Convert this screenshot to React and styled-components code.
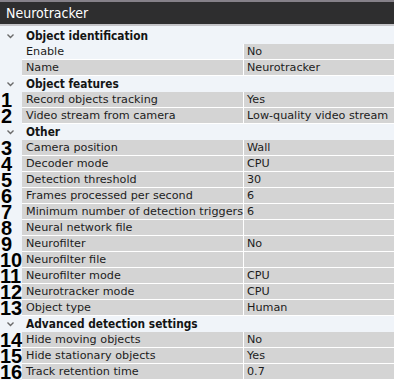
import styled, { createGlobalStyle } from 'styled-components';

const GlobalStyle = createGlobalStyle`
  body {
    margin: 0;
    background: #f0f4f9;
    font-family: "DejaVu Sans Condensed", "DejaVu Sans", sans-serif;
  }
`;

const Panel = styled.div`
  width: 394px;
  height: 380px;
  overflow: hidden;
  background: #f0f4f9;
`;

const TitleBar = styled.div`
  height: 22px;
  border-top: 2px solid #858189;
  border-bottom: 2px solid #c4c4c8;
  background: #2e2e2f;
  color: #fff;
  font-size: 14px;
  line-height: 22px;
  padding-left: 6px;
`;

const List = styled.div`
  padding-top: 2px;
`;

const SectionHeader = styled.div`
  display: flex;
  align-items: center;
  height: 16px;
  font-size: 11.8px;
  font-weight: bold;
  color: #141414;
`;

const Chevron = styled.svg`
  width: 22px;
  height: 16px;
  flex: none;
`;

const HeaderText = styled.span`
  padding-left: 4px;
`;

const Row = styled.div`
  display: grid;
  grid-template-columns: 22px 222px 150px;
  height: 16px;
  font-family: "DejaVu Sans", sans-serif;
  font-size: 11.2px;
  color: #1c1c1c;
`;

const Num = styled.div`
  position: relative;
  z-index: 1;
  font-family: "Liberation Sans", Arial, sans-serif;
  font-weight: bold;
  font-size: 20px;
  line-height: 16px;
  color: #000;
  padding-left: ${p => (p.$wide ? 0 : 1)}px;
  white-space: nowrap;
`;

const Cell = styled.div`
  background: ${p => (p.$plain ? 'transparent' : '#d4d4d4')};
  border-bottom: 1px solid #fff;
  line-height: 15px;
  padding-left: ${p => (p.$value ? 3 : 4)}px;
  white-space: nowrap;
  overflow: ${p => (p.$value ? 'hidden' : 'visible')};
`;

const LabelCell = styled(Cell)`
  border-right: 1px solid #fff;
`;

const sections = [
  {
    title: 'Object identification',
    rows: [
      { label: 'Enable', value: 'No', plain: true },
      { label: 'Name', value: 'Neurotracker' },
    ],
  },
  {
    title: 'Object features',
    rows: [
      { n: 1, label: 'Record objects tracking', value: 'Yes' },
      { n: 2, label: 'Video stream from camera', value: 'Low-quality video stream' },
    ],
  },
  {
    title: 'Other',
    rows: [
      { n: 3, label: 'Camera position', value: 'Wall' },
      { n: 4, label: 'Decoder mode', value: 'CPU' },
      { n: 5, label: 'Detection threshold', value: '30' },
      { n: 6, label: 'Frames processed per second', value: '6' },
      { n: 7, label: 'Minimum number of detection triggers', value: '6' },
      { n: 8, label: 'Neural network file', value: '' },
      { n: 9, label: 'Neurofilter', value: 'No' },
      { n: 10, label: 'Neurofilter file', value: '' },
      { n: 11, label: 'Neurofilter mode', value: 'CPU' },
      { n: 12, label: 'Neurotracker mode', value: 'CPU' },
      { n: 13, label: 'Object type', value: 'Human' },
    ],
  },
  {
    title: 'Advanced detection settings',
    rows: [
      { n: 14, label: 'Hide moving objects', value: 'No' },
      { n: 15, label: 'Hide stationary objects', value: 'Yes' },
      { n: 16, label: 'Track retention time', value: '0.7' },
    ],
  },
];

const ChevronIcon = () => (
  <Chevron viewBox="0 0 22 16">
    <polyline points="7.5,6.5 10.5,9.5 13.5,6.5" fill="none" stroke="#6a6a6a" strokeWidth="1.4" />
  </Chevron>
);

export default function App() {
  return (
    <Panel>
      <GlobalStyle />
      <TitleBar>Neurotracker</TitleBar>
      <List>
        {sections.map(s => (
          <div key={s.title}>
            <SectionHeader>
              <ChevronIcon />
              <HeaderText>{s.title}</HeaderText>
            </SectionHeader>
            {s.rows.map(r => (
              <Row key={r.label}>
                <Num $wide={r.n >= 10}>{r.n}</Num>
                <LabelCell $plain={r.plain}>{r.label}</LabelCell>
                <Cell $value>{r.value}</Cell>
              </Row>
            ))}
          </div>
        ))}
      </List>
    </Panel>
  );
}
